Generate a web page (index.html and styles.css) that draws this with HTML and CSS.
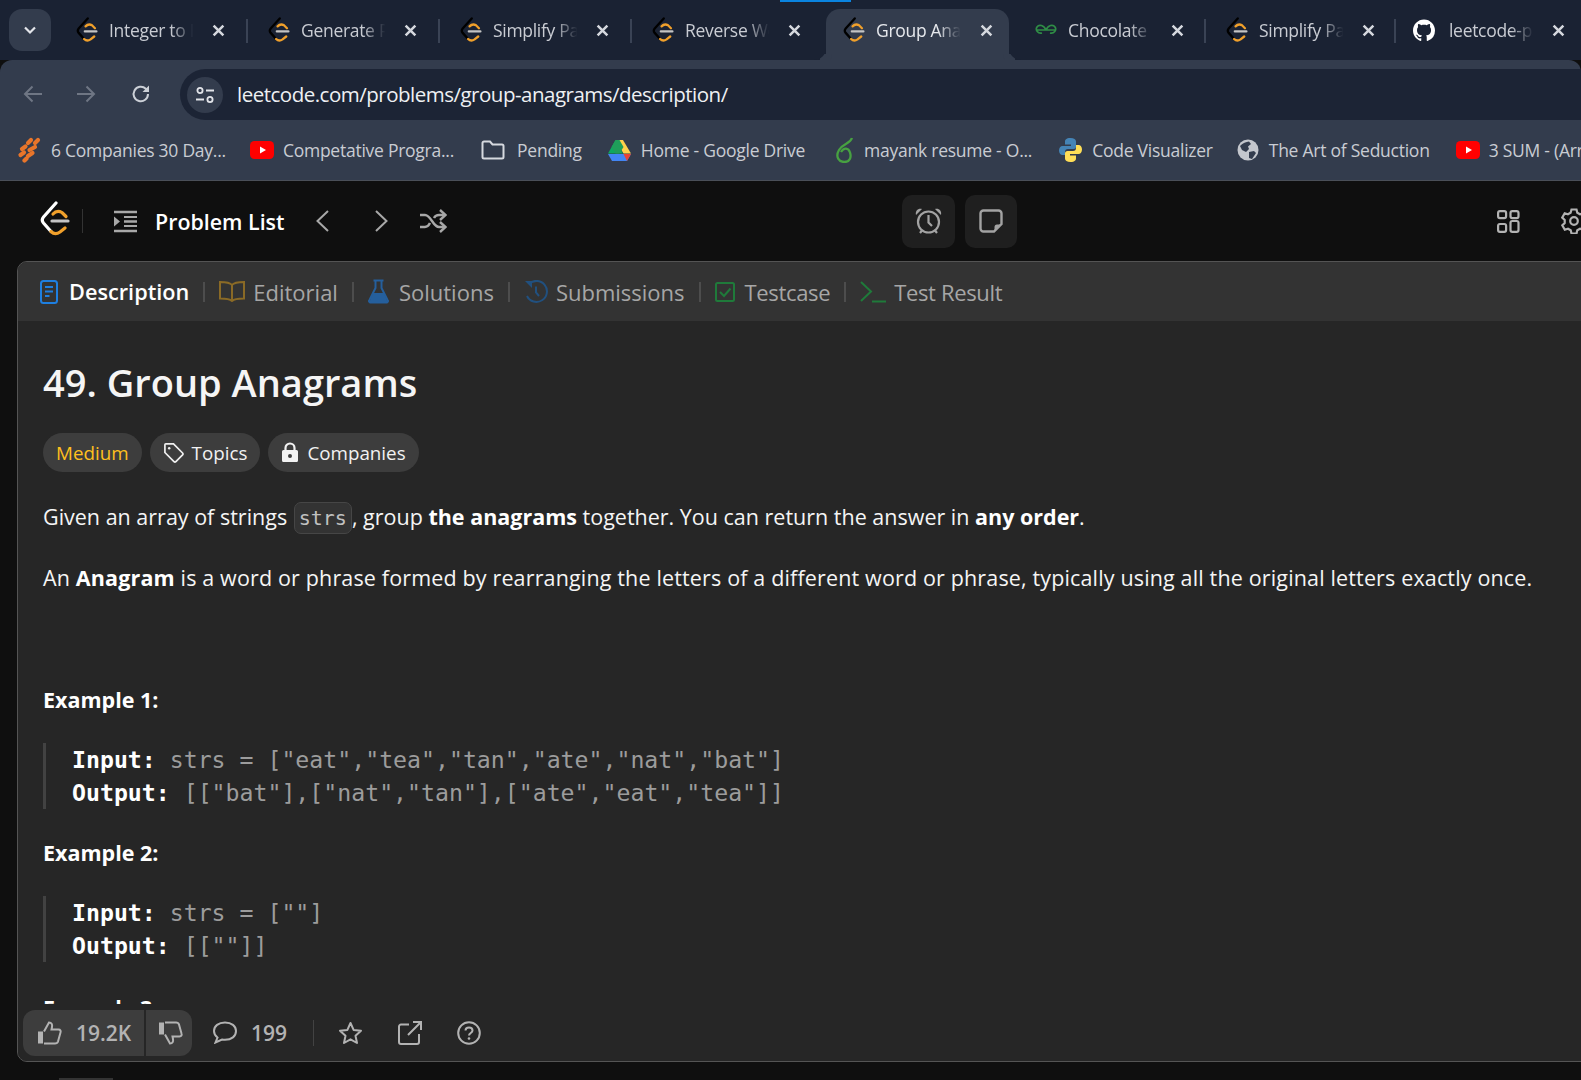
FILE: index.html
```html
<!DOCTYPE html>
<html lang="en">

<head>
  <meta charset="UTF-8">
  <meta name="viewport" content="width=device-width, initial-scale=1.0">
  <title>Group Anagrams - LeetCode</title>
  <link rel="stylesheet" href="styles.css">
</head>

<body>
  <svg class="defs" width="0" height="0">
    <symbol id="lc" viewBox="0 0 30 36">
      <path d="M16 2 3.500 16Q1 19 3.500 22L11 30.500" fill="none" stroke="currentColor" stroke-width="3.200" stroke-linecap="round"/>
      <path d="M11 30.500Q15 34.500 20 31L25 27" fill="none" stroke="#f0a02b" stroke-width="3.200" stroke-linecap="round"/>
      <path d="M13 13Q17 8.500 22 11.500L26 15.500" fill="none" stroke="#f0a02b" stroke-width="3.200" stroke-linecap="round"/>
      <path d="M12 20H28" fill="none" stroke="#c4c4c4" stroke-width="3.200" stroke-linecap="round"/>
    </symbol>
    <symbol id="yt" viewBox="0 0 24 18">
      <rect width="24" height="18" rx="4.500" fill="#f00"/>
      <path d="M10 5.500 16 9 10 12.500Z" fill="#fff"/>
    </symbol>
    <symbol id="close" viewBox="0 0 12 12">
      <path d="M1.500 1.500 10.500 10.500M10.500 1.500 1.500 10.500" fill="none" stroke="#d5d8de" stroke-width="2.300"/>
    </symbol>
  </svg>

  <div class="tabstrip">
    <div class="top-strip"><span class="top-strip-on"></span></div>
    <button class="tab-menu">
      <svg width="14" height="10" viewBox="0 0 14 10"><path d="M2 2.500 7 7.500 12 2.500" fill="none" stroke="#e3e5ea" stroke-width="2.200"/></svg>
    </button>
    <div class="tab tab-first">
      <svg class="favicon" width="22" height="26"><use href="#lc" color="#000"/></svg>
      <span class="tab-title">Integer to Roman</span>
      <svg class="tab-close" width="13" height="13"><use href="#close"/></svg>
    </div>
    <i class="tab-sep"></i>
    <div class="tab">
      <svg class="favicon" width="22" height="26"><use href="#lc" color="#000"/></svg>
      <span class="tab-title">Generate Parentheses</span>
      <svg class="tab-close" width="13" height="13"><use href="#close"/></svg>
    </div>
    <i class="tab-sep"></i>
    <div class="tab">
      <svg class="favicon" width="22" height="26"><use href="#lc" color="#000"/></svg>
      <span class="tab-title">Simplify Path</span>
      <svg class="tab-close" width="13" height="13"><use href="#close"/></svg>
    </div>
    <i class="tab-sep"></i>
    <div class="tab">
      <svg class="favicon" width="22" height="26"><use href="#lc" color="#000"/></svg>
      <span class="tab-title">Reverse Words</span>
      <svg class="tab-close" width="13" height="13"><use href="#close"/></svg>
    </div>
    <div class="tab tab-active">
      <svg class="favicon" width="22" height="26"><use href="#lc" color="#000"/></svg>
      <span class="tab-title">Group Anagrams</span>
      <svg class="tab-close" width="13" height="13"><use href="#close"/></svg>
    </div>
    <div class="tab tab-gfg">
      <svg class="favicon" width="22" height="12" viewBox="0 0 22 12"><path d="M1 6H21M11 6C9 1 4 0 2 3S3 10 7 9M11 6C13 1 18 0 20 3S19 10 15 9" fill="none" stroke="#2f8d46" stroke-width="1.700"/></svg>
      <span class="tab-title">Chocolate Distribution</span>
      <svg class="tab-close" width="13" height="13"><use href="#close"/></svg>
    </div>
    <i class="tab-sep"></i>
    <div class="tab tab-narrow">
      <svg class="favicon" width="22" height="26"><use href="#lc" color="#000"/></svg>
      <span class="tab-title">Simplify Path</span>
      <svg class="tab-close" width="13" height="13"><use href="#close"/></svg>
    </div>
    <i class="tab-sep"></i>
    <div class="tab tab-gh">
      <svg class="favicon" width="25" height="25" viewBox="0 0 16 16"><path fill="#fff" d="M8 0C3.580 0 0 3.580 0 8c0 3.540 2.290 6.530 5.470 7.590.4.070.55-.17.55-.38 0-.19-.01-.82-.01-1.490-2.010.37-2.530-.49-2.690-.94-.09-.23-.48-.94-.82-1.130-.28-.15-.68-.52-.01-.53.63-.01 1.080.58 1.230.82.72 1.210 1.870.87 2.330.66.07-.52.28-.87.51-1.070-1.780-.2-3.640-.89-3.640-3.950 0-.87.31-1.590.82-2.150-.08-.2-.36-1.020.08-2.120 0 0 .67-.21 2.200.82.64-.18 1.320-.27 2-.27.68 0 1.360.09 2 .27 1.530-1.040 2.200-.82 2.200-.82.44 1.100.16 1.920.08 2.120.51.56.82 1.270.82 2.150 0 3.070-1.870 3.750-3.650 3.950.29.25.54.73.54 1.480 0 1.070-.01 1.930-.01 2.200 0 .21.15.46.55.38A8.013 8.013 0 0 0 16 8c0-4.420-3.580-8-8-8z"/></svg>
      <span class="tab-title">leetcode-patterns</span>
      <svg class="tab-close" width="13" height="13"><use href="#close"/></svg>
    </div>
  </div>

  <div class="toolbar">
    <svg class="nav-arrow" width="20" height="18" viewBox="0 0 20 18"><path d="M19 9H2M9.500 1.500 2 9l7.500 7.500" fill="none" stroke="#6f7684" stroke-width="2"/></svg>
    <svg class="nav-arrow" width="20" height="18" viewBox="0 0 20 18"><path d="M1 9H18M10.500 1.500 18 9l-7.500 7.500" fill="none" stroke="#6f7684" stroke-width="2"/></svg>
    <svg class="nav-arrow" width="20" height="20" viewBox="0 0 20 20"><path d="M17 10a7.200 7.200 0 1 1-2.200-5.200L17 7" fill="none" stroke="#ccd0d7" stroke-width="2"/><path d="M18 1.500V8h-6.500z" fill="#ccd0d7"/></svg>
    <div class="omnibox">
      <span class="site-info">
        <svg width="20" height="18" viewBox="0 0 20 18"><g fill="none" stroke="#e2e4e9" stroke-width="1.800"><circle cx="5" cy="4.500" r="2.600"/><circle cx="15" cy="13.500" r="2.600"/><path d="M11 4.500H19M1 13.500H9"/></g></svg>
      </span>
      <span class="url">leetcode.com/problems/group-anagrams/description/</span>
    </div>
  </div>

  <div class="bookmarks">
    <a class="bm bm-first">
      <svg width="24" height="26" viewBox="0 0 24 26"><g stroke="#e8752a" stroke-width="4.200" stroke-linecap="round"><path d="M11 6 14 3M18 6 21 3"/><path d="M5 12 8.500 9.500M12.500 13 18 10"/><path d="M3.500 18 7 15.500M11 19 15.500 16"/><path d="M7.500 23.500 9.500 21.500"/></g></svg>
      <span>6 Companies 30 Day...</span>
    </a>
    <a class="bm bm-yt1">
      <svg width="24" height="18"><use href="#yt"/></svg>
      <span>Competative Progra...</span>
    </a>
    <a class="bm bm-folder">
      <svg width="24" height="20" viewBox="0 0 24 20"><path d="M1.500 17V3a1.500 1.500 0 0 1 1.500-1.500h6L11.500 4.500H21A1.500 1.500 0 0 1 22.500 6V17A1.500 1.500 0 0 1 21 18.500H3A1.500 1.500 0 0 1 1.500 17Z" fill="none" stroke="#d6d9df" stroke-width="2"/></svg>
      <span>Pending</span>
    </a>
    <a class="bm bm-drive">
      <svg width="23" height="21" viewBox="0 0 23 21"><path d="M7.600 0H15L23 13.500H15.500z" fill="#ffd04b"/><path d="M7.500 0 15 13.500H0z" fill="#0da960"/><path d="M7.600 0H11.500L15.500 7 11.500 13.500 7.500 13.500 3.500 7z" fill="#1f9e5a"/><path d="M0 14H23L19 21H4z" fill="#4285f4"/><path d="M15.500 14H23L19 21z" fill="#ea4335"/></svg>
      <span>Home - Google Drive</span>
    </a>
    <a class="bm bm-leaf">
      <svg width="17" height="26" viewBox="0 0 17 26"><path d="M16 1C14 7 7 6 3 13S3 25 8.500 25s7-5 5.500-9.500S8 10 5 15" fill="none" stroke="#47a141" stroke-width="2.300"/></svg>
      <span>mayank resume - O...</span>
    </a>
    <a class="bm bm-py">
      <svg width="23" height="26" viewBox="0 0 23 26"><path d="M11.500 1C7 1 6 3 6 4.500V7.500h6V9H3.500C1.500 9 0 11 0 13.500S1.500 18 3.500 18H6V15a3 3 0 0 1 3-3h5.500A2.500 2.500 0 0 0 17 9.500V4.500C17 2.500 15 1 11.500 1Z" fill="#4584b6"/><path d="M11.500 25C16 25 17 23 17 21.500V18.500h-6V17h8.500c2 0 3.500-2 3.500-4.500S21.500 8 19.500 8H17v3a3 3 0 0 1-3 3H8.500A2.500 2.500 0 0 0 6 16.500v5C6 23.500 8 25 11.500 25Z" fill="#ffde57"/></svg>
      <span>Code Visualizer</span>
    </a>
    <a class="bm bm-globe">
      <svg width="22" height="22" viewBox="0 0 22 22"><circle cx="11" cy="11" r="10.500" fill="#c4c7cd"/><path d="M3 7C6 4 9 3 12 2.500L14 5 11 7.500 12 10 9 13 5 11ZM12 13 17 12 19 14 15 20 12 19Z" fill="#333c4d"/></svg>
      <span>The Art of Seduction</span>
    </a>
    <a class="bm bm-yt2">
      <svg width="24" height="18"><use href="#yt"/></svg>
      <span>3 SUM - (Array)</span>
    </a>
  </div>

  <nav class="lc-nav">
    <svg class="lc-logo" width="30" height="36"><use href="#lc" color="#fff"/></svg>
    <i class="nav-divider"></i>
    <svg class="list-icon" width="25" height="23" viewBox="0 0 25 23"><path d="M1 2H24M11 11.500H24M1 21H24" stroke="#a8a8a8" stroke-width="2.500"/><path d="M1 6.500 7 11.500 1 16.500Z" fill="#a8a8a8"/><path d="M11 7H24M11 16H24" stroke="#a8a8a8" stroke-width="2"/></svg>
    <span class="problem-list">Problem List</span>
    <svg class="chev chev-l" width="15" height="24" viewBox="0 0 15 24"><path d="M13 2 2.500 12 13 22" fill="none" stroke="#a8a8a8" stroke-width="2"/></svg>
    <svg class="chev chev-r" width="15" height="24" viewBox="0 0 15 24"><path d="M2 2 12.500 12 2 22" fill="none" stroke="#a8a8a8" stroke-width="2"/></svg>
    <svg class="shuffle" width="28" height="24" viewBox="0 0 28 24"><g fill="none" stroke="#a8a8a8" stroke-width="2.400"><path d="M1 6H6C12 6 14 18 20 18H26M1 18H6C8.500 18 10 16 11 14M15 9C16 7 18 6 20 6H26"/><path d="M21 1 26.500 6 21 11M21 13 26.500 18 21 23"/></g></svg>
    <div class="nav-center">
      <button class="square-btn square-timer">
        <svg width="29" height="29" viewBox="0 0 29 29"><g fill="none" stroke="#a3a3a3" stroke-width="2.200"><circle cx="14.500" cy="15" r="10.500"/><path d="M14.500 8V15.500L18 19M6 26 8 23.500M23 26 21 23.500"/></g><path d="M2 8C1 4 4 1 8 2ZM27 8C28 4 25 1 21 2Z" fill="#a3a3a3"/></svg>
      </button>
      <button class="square-btn square-note">
        <svg width="24" height="24" viewBox="0 0 24 24"><path d="M15 22.500H4.500a3 3 0 0 1-3-3V4.500a3 3 0 0 1 3-3h15a3 3 0 0 1 3 3V15Z" fill="none" stroke="#a3a3a3" stroke-width="2.400"/><path d="M22 15.500 15.500 22V18a2.500 2.500 0 0 1 2.500-2.500Z" fill="#a3a3a3"/></svg>
      </button>
    </div>
    <svg class="layout-icon" width="23" height="23" viewBox="0 0 23 23"><g fill="none" stroke="#b3b3b3" stroke-width="2.200"><rect x="1.100" y="1.100" width="8" height="7" rx="1.800"/><rect x="13.500" y="1.100" width="8" height="7" rx="1.800"/><rect x="1.100" y="14" width="8" height="7.800" rx="1.800"/><rect x="13.500" y="11" width="8" height="10.800" rx="1.800"/></g></svg>
    <svg class="gear-icon" width="26" height="26" viewBox="0 0 26 26"><g fill="none" stroke="#b3b3b3" stroke-width="2.200"><circle cx="13" cy="13" r="3.800"/><path d="M10.500 1.500h5l.8 3.300 2.700 1.500 3.200-1 2.500 4.300-2.400 2.300v3.200l2.400 2.300-2.500 4.300-3.200-1-2.700 1.500-.8 3.300h-5l-.8-3.300-2.700-1.500-3.200 1-2.500-4.300 2.400-2.300v-3.200L1.200 9.600 3.700 5.300l3.200 1 2.700-1.500z"/></g></svg>
  </nav>

  <main class="panel">
    <div class="panel-tabs">
      <a class="ptab ptab-on">
        <svg width="18" height="24" viewBox="0 0 18 24"><rect x="1" y="1" width="16" height="22" rx="2.500" fill="none" stroke="#1e7fe0" stroke-width="2"/><path d="M5 7H13M5 11.500H13M5 16H9.500" stroke="#1e7fe0" stroke-width="2"/></svg>
        <span>Description</span>
      </a>
      <i class="ptab-sep"></i>
      <a class="ptab">
        <svg width="26" height="21" viewBox="0 0 26 21"><path d="M13 4C11 1.500 8 1 1 1V17.500C8 17.500 11 18 13 20 15 18 18 17.500 25 17.500V1C18 1 15 1.500 13 4ZM13 4V20" fill="none" stroke="#8a6a26" stroke-width="2"/></svg>
        <span>Editorial</span>
      </a>
      <i class="ptab-sep"></i>
      <a class="ptab ptab-wide">
        <svg width="21" height="25" viewBox="0 0 21 25"><path d="M7.500 1.500V9L1.500 21a1.500 1.500 0 0 0 1.500 2.500H18a1.500 1.500 0 0 0 1.500-2.500L13.500 9V1.500M5.500 1.500H15.500" fill="none" stroke="#255f9c" stroke-width="2"/><path d="M5 14H16L20 24H1Z" fill="#255f9c"/></svg>
        <span>Solutions</span>
      </a>
      <i class="ptab-sep"></i>
      <a class="ptab">
        <svg width="24" height="24" viewBox="0 0 24 24"><path d="M5 4A10.500 10.500 0 1 1 3 16M12 6.500V12.500L15 16" fill="none" stroke="#21507f" stroke-width="2"/><path d="M1 1H8V8Z" fill="#21507f"/></svg>
        <span>Submissions</span>
      </a>
      <i class="ptab-sep"></i>
      <a class="ptab ptab-wide ptab-tight">
        <svg width="20" height="20" viewBox="0 0 20 20"><rect x="1" y="1" width="18" height="18" rx="1.500" fill="none" stroke="#1f7a3a" stroke-width="2"/><path d="M5 10 9 14 15.500 6.500" fill="none" stroke="#1f7a3a" stroke-width="2"/></svg>
        <span>Testcase</span>
      </a>
      <i class="ptab-sep"></i>
      <a class="ptab ptab-tight">
        <svg width="26" height="22" viewBox="0 0 26 22"><path d="M1 1 11 10.500 1 20M12 20.500H26" fill="none" stroke="#1f7a3a" stroke-width="2"/></svg>
        <span>Test Result</span>
      </a>
    </div>

    <div class="desc">
      <h1>49. Group Anagrams</h1>
      <div class="pills">
        <span class="pill pill-medium">Medium</span>
        <span class="pill">
          <svg width="21" height="21" viewBox="0 0 22 22"><path d="M2 3a1 1 0 0 1 1-1H11L20.500 11.500a1.500 1.500 0 0 1 0 2L13.500 20.500a1.500 1.500 0 0 1-2 0L2 11Z" fill="none" stroke="#eee" stroke-width="1.800"/><circle cx="6.500" cy="6.500" r="1.300" fill="#eee"/></svg>
          Topics
        </span>
        <span class="pill">
          <svg width="18" height="21" viewBox="0 0 18 21"><path d="M4.500 9V6a4.500 4.500 0 0 1 9 0V9" fill="none" stroke="#f2f2f2" stroke-width="2.200"/><path d="M2.500 8h13A1.500 1.500 0 0 1 17 9.500v9a1.500 1.500 0 0 1-1.500 1.500h-13A1.500 1.500 0 0 1 1 18.500v-9A1.500 1.500 0 0 1 2.500 8Zm6.500 4a2 2 0 1 0 0 4 2 2 0 0 0 0-4Z" fill="#f2f2f2" fill-rule="evenodd"/></svg>
          Companies
        </span>
      </div>
      <p class="first">Given an array of strings <code>strs</code>, group <strong>the anagrams</strong> together. You can return the answer in <strong>any order</strong>.</p>
      <p class="second">An <strong>Anagram</strong> is a word or phrase formed by rearranging the letters of a different word or phrase, typically using all the original letters exactly once.</p>

      <p class="ex ex-first"><strong>Example 1:</strong></p>
      <pre><strong>Input:</strong> strs = ["eat","tea","tan","ate","nat","bat"]
<strong>Output:</strong> [["bat"],["nat","tan"],["ate","eat","tea"]]</pre>
      <p class="ex"><strong>Example 2:</strong></p>
      <pre><strong>Input:</strong> strs = [""]
<strong>Output:</strong> [[""]]</pre>
      <p class="ex ex-last"><strong>Example 3:</strong></p>
    </div>

    <div class="panel-foot">
      <div class="votes">
        <span class="vote-up">
          <svg width="25" height="24" viewBox="0 0 25 24"><path d="M1 10.500H6V22.500H1Z" fill="#b3b3b3"/><path d="M7 10.500 12 1.500C14.500 1.500 15.500 3.500 15 6L14.500 8.500H21.500C23.500 8.500 24 10 23.500 11.500L21 20.500C20.500 22 19.500 22.500 18 22.500H7" fill="none" stroke="#b3b3b3" stroke-width="2"/></svg>
          19.2K
        </span>
        <span class="vote-down">
          <svg width="25" height="24" viewBox="0 0 25 24"><path d="M1 1.500H6V13.500H1Z" fill="#b3b3b3"/><path d="M7 13.500 12 22.500C14.500 22.500 15.500 20.500 15 18L14.500 15.500H21.500C23.500 15.500 24 14 23.500 12.500L21 3.500C20.500 2 19.500 1.500 18 1.500H7" fill="none" stroke="#b3b3b3" stroke-width="2"/></svg>
        </span>
      </div>
      <span class="comments">
        <svg width="24" height="23" viewBox="0 0 24 23"><path d="M12 1.500C5.500 1.500 1 5 1 10c0 3 1.500 5 3.500 6.500L2.500 21.500 9 18.500c1 .2 2 .3 3 .3 6.500 0 11-3.500 11-8.700S18.500 1.500 12 1.500Z" fill="none" stroke="#b3b3b3" stroke-width="2"/></svg>
        199
      </span>
      <i class="foot-sep"></i>
      <svg class="foot-star" width="25" height="24" viewBox="0 0 25 24"><path d="M12.500 2 15.600 8.900 23 9.700 17.500 14.700 19 22 12.500 18.300 6 22 7.500 14.700 2 9.700 9.400 8.900Z" fill="none" stroke="#b3b3b3" stroke-width="2" stroke-linejoin="round"/></svg>
      <svg class="foot-share" width="24" height="24" viewBox="0 0 24 24"><path d="M11 3.500H3A2 2 0 0 0 1 5.500V21A2 2 0 0 0 3 23H19A2 2 0 0 0 21 21V13M10 14 23 1M15 1H23V9" fill="none" stroke="#b3b3b3" stroke-width="2"/></svg>
      <svg class="foot-help" width="24" height="24" viewBox="0 0 24 24"><circle cx="12" cy="12" r="10.800" fill="none" stroke="#b3b3b3" stroke-width="2"/><path d="M8.500 9.500C8.500 7.500 10 6.500 12 6.500S15.500 7.800 15.500 9.500C15.500 12 12 12 12 14.500" fill="none" stroke="#b3b3b3" stroke-width="2"/><circle cx="12" cy="17.500" r="1.300" fill="#b3b3b3"/></svg>
    </div>
  </main>
  <div class="page-end"><span></span></div>
</body>

</html>
```

FILE: styles.css
```css
html, body {
  margin: 0;
  height: 1080px;
  overflow: hidden;
}

body {
  font-family: "Open Sans", Arial, sans-serif;
  background-color: #0f0f0f;
  color: #f5f5f5;
}

.defs {
  display: block;
  height: 0;
}

svg {
  display: block;
  flex: none;
}

/* browser chrome */
.tabstrip {
  position: relative;
  display: flex;
  align-items: flex-end;
  height: 60px;
  background-color: #1a2233;
  white-space: nowrap;
  overflow: hidden;
}

.top-strip {
  position: absolute;
  left: 0;
  top: 0;
  width: 1140px;
  height: 2px;
}

.top-strip-on {
  display: block;
  width: 71px;
  height: 2px;
  margin-left: 780px;
  background-color: #0a84e0;
}

.tab-menu {
  flex: none;
  width: 42px;
  height: 42px;
  margin: 0 0 9px 9px;
  padding: 0 0 0 14px;
  border: 0;
  border-radius: 13px;
  background-color: #333c4d;
}

.tab {
  flex: none;
  display: flex;
  align-items: center;
  width: 192px;
  height: 51px;
  padding: 0 0 9px 20px;
  box-sizing: border-box;
}

.tab-first {
  width: 191px;
  margin-left: 5px;
}

.favicon {
  width: 22px;
  margin-right: 11px;
}

.tab-title {
  width: 88px;
  overflow: hidden;
  font-size: 17.500px;
  letter-spacing: -0.3px;
  color: #c9ccd3;
  -webkit-mask-image: linear-gradient(to right, #000 70%, transparent 96%);
  mask-image: linear-gradient(to right, #000 70%, transparent 96%);
}

.tab-close {
  margin-left: 15px;
}

.tab-sep {
  flex: none;
  width: 2px;
  height: 24px;
  margin: 0 0 17px -1px;
  background-color: #3a4355;
}

.tab-sep + .tab {
  margin-left: -1px;
  padding-left: 21px;
}

.tab-active {
  position: relative;
  width: 183px;
  margin-left: 3px;
  padding-left: 17px;
  border-radius: 14px 14px 0 0;
  background-color: #333c4d;
}

.tab-active .tab-title {
  color: #e6e8ec;
}

.tab-active .tab-close {
  margin-left: 16px;
}

.tab-active::before, .tab-active::after {
  content: "";
  position: absolute;
  bottom: 0;
  width: 12px;
  height: 12px;
  background-color: #1a2233;
}

.tab-active::before {
  left: -12px;
  border-bottom-right-radius: 12px;
  box-shadow: 6px 6px 0 #333c4d;
}

.tab-active::after {
  right: -12px;
  border-bottom-left-radius: 12px;
  box-shadow: -6px 6px 0 #333c4d;
}

.tab-gfg {
  width: 190px;
  margin-left: 6px;
}

.tab-narrow {
  width: 190px;
}

.tab-sep + .tab-gh {
  padding-left: 18px;
}

.tab-gh .favicon {
  margin-right: 14px;
}

.toolbar {
  display: flex;
  align-items: flex-end;
  height: 60px;
  box-sizing: border-box;
  background-color: #333c4d;
  border-radius: 12px 12px 0 0;
}

.nav-arrow {
  margin: 0 0 17px 0;
}

.nav-arrow:nth-child(1) {
  margin-left: 23px;
}

.nav-arrow:nth-child(2) {
  margin-left: 33px;
}

.nav-arrow:nth-child(3) {
  margin-left: 35px;
  margin-bottom: 16px;
}

.omnibox {
  flex: 1;
  display: flex;
  align-items: center;
  height: 51px;
  margin-left: 29px;
  padding-left: 7px;
  border-radius: 26px 0 0 26px;
  background-color: #1c2435;
}

.site-info {
  display: flex;
  align-items: center;
  justify-content: center;
  width: 36px;
  height: 36px;
  border-radius: 50%;
  background-color: #333c4d;
}

.url {
  margin: 0 0 2px 14px;
  font-size: 20.500px;
  letter-spacing: -0.5px;
  color: #eef0f3;
}

.bookmarks {
  display: flex;
  align-items: center;
  height: 60px;
  border-bottom: 1px solid #4a4f58;
  background-color: #333c4d;
  font-size: 17.500px;
  letter-spacing: -0.25px;
  color: #c9ccd3;
  white-space: nowrap;
  overflow: hidden;
}

.bm {
  flex: none;
  display: flex;
  align-items: center;
  gap: 9px;
}

.bm span {
  margin-bottom: 1px;
}

.bm-first { margin-left: 17px; gap: 10px; }
.bm-yt1 { margin-left: 24px; }
.bm-folder { margin-left: 27px; gap: 12px; }
.bm-drive { margin-left: 26px; gap: 10px; }
.bm-leaf { margin-left: 31px; gap: 11px; }
.bm-py { margin-left: 27px; gap: 10px; }
.bm-globe { margin-left: 24px; gap: 10px; }
.bm-yt2 { margin-left: 26px; }

/* leetcode nav */
.lc-nav {
  display: flex;
  align-items: center;
  width: 1620px;
  height: 80px;
}

.lc-logo {
  margin: -4px 0 0 40px;
}

.nav-divider {
  width: 1px;
  height: 24px;
  margin-left: 12px;
  background-color: #333;
}

.list-icon {
  margin-left: 30px;
}

.problem-list {
  margin-left: 17px;
  font-size: 21.400px;
  font-weight: 600;
  color: #fff;
}

.chev-l { margin-left: 31px; }
.chev-r { margin-left: 44px; }
.shuffle { margin-left: 30px; }

.nav-center {
  display: flex;
  gap: 10px;
  margin-left: 455px;
}

.square-btn {
  display: flex;
  align-items: center;
  justify-content: center;
  height: 53px;
  padding: 0;
  border: 0;
  border-radius: 10px;
  background-color: #1f1f1f;
}

.square-timer { width: 53px; }
.square-note { width: 52px; }

.layout-icon { margin-left: 480px; }
.gear-icon { margin-left: 41px; }

/* panel */
.panel {
  display: flex;
  flex-direction: column;
  width: 1640px;
  height: 801px;
  margin-left: 17px;
  box-sizing: border-box;
  border: 1px solid #545454;
  border-radius: 10px;
  background-color: #262626;
  overflow: hidden;
}

.panel-tabs {
  flex: none;
  display: flex;
  align-items: center;
  height: 59px;
  background-color: #333;
  font-size: 22px;
  color: #a6a6a6;
}

.ptab {
  display: flex;
  align-items: center;
  gap: 8px;
}

.ptab:first-child {
  margin-left: 22px;
  gap: 11px;
}

.ptab-on {
  color: #fff;
  font-size: 21.700px;
  font-weight: 600;
}

.ptab-wide {
  gap: 10px;
}

.ptab-tight {
  letter-spacing: -0.35px;
}

.ptab-sep {
  width: 2px;
  height: 20px;
  margin: 0 14px;
  background-color: #4d4d4d;
}

.desc {
  flex: 1;
  min-height: 0;
  overflow: hidden;
  padding-left: 25px;
}

h1 {
  margin: 38px 0 0;
  font-size: 38px;
  line-height: 46px;
  font-weight: 600;
  color: #f5f5f5;
}

.pills {
  display: flex;
  gap: 8px;
  margin-top: 28px;
}

.pill {
  display: flex;
  align-items: center;
  gap: 8px;
  height: 39px;
  padding: 0 13px;
  border-radius: 20px;
  background-color: #3d3d3d;
  font-size: 18.800px;
  color: #f2f2f2;
}

.pill-medium {
  color: #ffc01e;
}

p {
  margin: 0;
  font-size: 21.500px;
  line-height: 33px;
}

p.first {
  margin-top: 28px;
}

p.second {
  margin-top: 27px;
  letter-spacing: 0.15px;
}

p.ex {
  margin-top: 27px;
}

p.ex-first {
  margin-top: 89px;
}

p.ex-last {
  margin-top: 29px;
}

strong {
  font-weight: 700;
  color: #fff;
}

code {
  display: inline-block;
  margin-left: 1px;
  padding: 0 4px;
  line-height: 30px;
  border: 1px solid #464646;
  border-radius: 7px;
  background-color: #333;
  font-family: "DejaVu Sans Mono", monospace;
  font-size: 20px;
  color: #c0c0c0;
}

pre {
  margin: 27px 0 0;
  padding-left: 26px;
  border-left: 3px solid #424242;
  font-family: "DejaVu Sans Mono", monospace;
  font-size: 23.200px;
  line-height: 33px;
  color: #9c9c9c;
}

.panel-foot {
  flex: none;
  display: flex;
  align-items: center;
  height: 57px;
  box-sizing: border-box;
  padding-left: 5px;
  background-color: #262626;
  font-size: 21px;
  color: #b3b3b3;
}

.votes {
  display: flex;
  gap: 2px;
  height: 46px;
}

.vote-up, .vote-down {
  display: flex;
  align-items: center;
  background-color: #3d3d3d;
  font-weight: 600;
}

.vote-up {
  gap: 14px;
  width: 121px;
  padding-left: 14px;
  box-sizing: border-box;
  border-radius: 12px 0 0 12px;
}

.vote-down {
  width: 46px;
  padding-left: 12px;
  box-sizing: border-box;
  border-radius: 0 12px 12px 0;
}

.comments {
  display: flex;
  align-items: center;
  gap: 14px;
  margin-left: 21px;
  font-weight: 600;
}

.foot-sep {
  width: 1px;
  height: 26px;
  margin-left: 26px;
  background-color: #424242;
}

.foot-star { margin-left: 24px; }
.foot-share { margin-left: 35px; }
.foot-help { margin-left: 35px; }

.page-end {
  height: 18px;
}

.page-end span {
  display: block;
  width: 54px;
  height: 2px;
  margin: 16px 0 0 59px;
  background-color: #333;
}
```
